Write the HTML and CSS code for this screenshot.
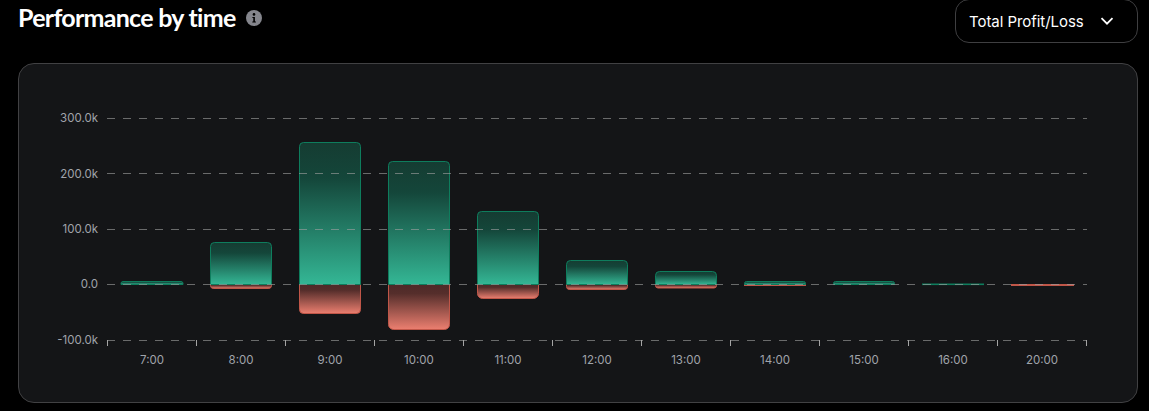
FILE: index.html
```html
<!DOCTYPE html>
<html lang="en">
<head>
    <meta charset="UTF-8">
    <meta name="viewport" content="width=device-width, initial-scale=1.0">
    <title>Performance by time</title>
    <link rel="stylesheet" href="styles.css">
</head>
<body>
    <div class="page">
        <div class="header">
            <div class="title-group">
                <h2 class="title">Performance by time</h2>
                <svg class="info-icon" viewBox="0 0 16 16" width="16" height="16">
                    <circle cx="8" cy="8" r="8" fill="#85868d"/>
                    <circle cx="8" cy="4.4" r="1.3" fill="#000"/>
                    <path d="M6.4 6.9h2.5v4.6h1v1.1H6.3v-1.1h1V8H6.4z" fill="#000"/>
                </svg>
            </div>
            <button class="select">
                <span>Total Profit/Loss</span>
                <svg viewBox="0 0 14 14" width="14" height="14">
                    <path d="M1.5 4.2 7 9.7l5.5-5.5" fill="none" stroke="#fff" stroke-width="1.8"/>
                </svg>
            </button>
        </div>

        <div class="card">
            <!-- viewBox starts at the card's page offset, so the numbers read as page pixels -->
            <svg class="chart" viewBox="19 64 1118 338" width="1118" height="338">
                <defs>
                    <linearGradient id="green" x1="0" y1="0" x2="0" y2="1">
                        <stop offset="0" stop-color="#153c32"/>
                        <stop offset="0.25" stop-color="#14463a"/>
                        <stop offset="1" stop-color="#34b795"/>
                    </linearGradient>
                    <linearGradient id="red" x1="0" y1="0" x2="0" y2="1">
                        <stop offset="0" stop-color="#4e2a28"/>
                        <stop offset="0.2" stop-color="#552e2b"/>
                        <stop offset="1" stop-color="#ec7f70"/>
                    </linearGradient>
                </defs>

                <!-- y axis -->
                <g class="axis-label y-label">
                    <text x="98" y="122">300.0k</text>
                    <text x="98" y="177.5">200.0k</text>
                    <text x="98" y="233">100.0k</text>
                    <text x="98" y="288">0.0</text>
                    <text x="98" y="344">-100.0k</text>
                </g>

                <!-- bars -->
                <g class="bar-red">
                    <path d="M210.5 284.5h61v1a3 3 0 0 1-3 3h-55a3 3 0 0 1-3-3z"/>
                    <path d="M299.5 284.5h61v25a4 4 0 0 1-4 4h-53a4 4 0 0 1-4-4z"/>
                    <path d="M388.5 284.5h61v40a5 5 0 0 1-5 5h-51a5 5 0 0 1-5-5z"/>
                    <path d="M477.5 284.5h61v9a5 5 0 0 1-5 5h-51a5 5 0 0 1-5-5z"/>
                    <path d="M566.5 284.5h61v2a3 3 0 0 1-3 3h-55a3 3 0 0 1-3-3z"/>
                    <path d="M655.5 284.5h61v1a2.500 2.500 0 0 1-2.500 2.500h-56a2.500 2.500 0 0 1-2.500-2.500z"/>
                    <rect x="744.5" y="284.500" width="61" height="1"/>
                    <rect x="1011.500" y="284.500" width="62" height="1"/>
                </g>
                <g class="bar-green">
                    <path d="M121 284.500v-1a2 2 0 0 1 2-2h58a2 2 0 0 1 2 2v1z"/>
                    <path d="M210.500 284.500v-38a4 4 0 0 1 4-4h53a4 4 0 0 1 4 4v38z"/>
                    <path d="M299.500 284.500v-138a4 4 0 0 1 4-4h53a4 4 0 0 1 4 4v138z"/>
                    <path d="M388.500 284.500v-119a4 4 0 0 1 4-4h53a4 4 0 0 1 4 4v119z"/>
                    <path d="M477.500 284.500v-69a4 4 0 0 1 4-4h53a4 4 0 0 1 4 4v69z"/>
                    <path d="M566.500 284.500v-20a4 4 0 0 1 4-4h53a4 4 0 0 1 4 4v20z"/>
                    <path d="M655.500 284.500v-9a4 4 0 0 1 4-4h53a4 4 0 0 1 4 4v9z"/>
                    <path d="M744.500 284.500v-1a2 2 0 0 1 2-2h57a2 2 0 0 1 2 2v1z"/>
                    <path d="M833.500 284.500v-1a2 2 0 0 1 2-2h57a2 2 0 0 1 2 2v1z"/>
                    <rect x="922.500" y="284" width="61" height="0.6"/>
                </g>

                <!-- grid -->
                <g class="grid">
                    <line x1="107" x2="1087" y1="118.500" y2="118.500"/>
                    <line x1="107" x2="1087" y1="173.500" y2="173.500"/>
                    <line x1="107" x2="1087" y1="229.500" y2="229.500"/>
                    <line x1="107" x2="1087" y1="284.500" y2="284.500"/>
                    <line x1="107" x2="1087" y1="340.500" y2="340.500"/>
                </g>

                <!-- x axis ticks -->
                <path class="ticks" d="M107.500 340v6M196.500 340v6M285.500 340v6M374.500 340v6M463.500 340v6M552.500 340v6M641.500 340v6M730.500 340v6M819.500 340v6M908.500 340v6M997.500 340v6M1086.500 340v6"/>

                <g class="axis-label x-label">
                    <text x="152" y="364">7:00</text>
                    <text x="241" y="364">8:00</text>
                    <text x="330" y="364">9:00</text>
                    <text x="419" y="364">10:00</text>
                    <text x="508" y="364">11:00</text>
                    <text x="597" y="364">12:00</text>
                    <text x="686" y="364">13:00</text>
                    <text x="775" y="364">14:00</text>
                    <text x="864" y="364">15:00</text>
                    <text x="953" y="364">16:00</text>
                    <text x="1042" y="364">20:00</text>
                </g>
            </svg>
        </div>
    </div>
</body>
</html>
```

FILE: styles.css
```css
* {
    box-sizing: border-box;
    margin: 0;
    padding: 0;
}

body {
    background-color: #000;
    color: #fff;
    overflow: hidden;
}

.page {
    width: 1120px;
    margin-left: 18px;
}

.header {
    display: flex;
    justify-content: space-between;
    align-items: flex-start;
    height: 63px;
}

.title-group {
    display: flex;
    align-items: center;
    gap: 10px;
    height: 36px;
}

.title {
    font-family: 'Lato', sans-serif;
    font-size: 25px;
    font-weight: 700;
    letter-spacing: -0.72px;
    line-height: 34px;
    margin-top: -2px;
}

.info-icon {
    display: block;
}

.select {
    display: flex;
    align-items: center;
    gap: 16px;
    width: 183px;
    height: 44px;
    margin-top: -1px;
    padding: 0 22px 0 13px;
    background: none;
    border: 1px solid #3f3f41;
    border-radius: 14px;
    color: #fff;
    font-family: 'Inter', sans-serif;
    font-size: 15px;
    font-weight: 400;
    letter-spacing: -0.05px;
}

.card {
    height: 340px;
    background-color: #141517;
    border: 1px solid #414143;
    border-radius: 16px;
    overflow: hidden;
}

.chart {
    display: block;
}

.axis-label {
    font-family: 'Inter', sans-serif;
    font-size: 11.500px;
    fill: #a0a4ab;
}

.y-label {
    text-anchor: end;
}

.x-label {
    text-anchor: middle;
}

.bar-green path,
.bar-green rect {
    fill: url(#green);
    stroke: #0e7d5d;
    stroke-width: 1;
}

.bar-red path,
.bar-red rect {
    fill: url(#red);
    stroke: #c05648;
    stroke-width: 1;
}

.grid line {
    stroke: rgba(160, 160, 160, 0.62);
    stroke-width: 1;
    stroke-dasharray: 8 8;
}

.ticks {
    fill: none;
    stroke: #a5a5a5;
    stroke-width: 1;
}
```
